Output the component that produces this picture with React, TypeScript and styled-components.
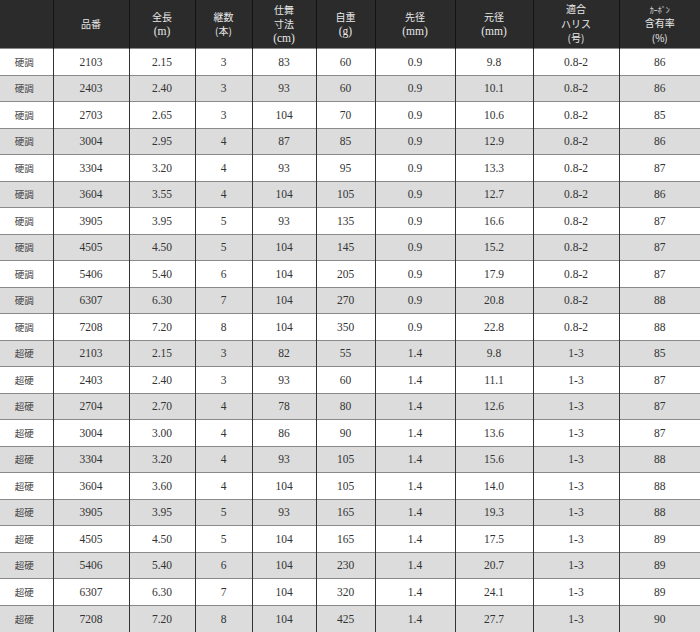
import React from "react";
import styled, { createGlobalStyle } from "styled-components";

const Global = createGlobalStyle`
  html, body { margin: 0; padding: 0; background: #ffffff; }
`;

const Table = styled.table`
  width: 700px;
  border-collapse: collapse;
  table-layout: fixed;
  font-family: "Liberation Serif", "DejaVu Serif", serif;
  color: #333333;
`;

const HeadCell = styled.th`
  height: 48px;
  padding: 0;
  background: #2b2b2b;
  color: #e8e8e8;
  font-weight: normal;
  font-size: 11.5px;
  line-height: 13.5px;
  text-align: center;
  vertical-align: middle;
  border-left: 1px solid #141414;
  &:first-child { border-left: none; }
`;

const Jp = styled.span`
  font-family: "Noto Sans CJK JP", "Noto Sans", sans-serif;
  font-size: 10px;
`;

const Tiny = styled.span`
  font-family: "Noto Sans CJK JP", "Noto Sans", sans-serif;
  font-size: 8px;
`;

const Row = styled.tr<{ $alt: boolean }>`
  height: 26.5px;
  background: ${(p) => (p.$alt ? "#dcdcdc" : "#ffffff")};
`;

const Cell = styled.td`
  padding: 0;
  font-size: 11.5px;
  text-align: center;
  vertical-align: middle;
  border-top: 1px solid #8a8a8a;
  border-left: 1.5px solid #333333;
  &:first-child { border-left: none; }
`;

const TypeCell = styled(Cell)`
  font-family: "Noto Sans CJK JP", "Noto Sans", sans-serif;
  font-size: 9.5px;
  color: #444;
  padding-right: 4px;
`;

const widths = [53, 76, 66, 57, 64, 59, 80, 78, 86, 81];

const rows: string[][] = [
  ["硬調", "2103", "2.15", "3", "83", "60", "0.9", "9.8", "0.8-2", "86"],
  ["硬調", "2403", "2.40", "3", "93", "60", "0.9", "10.1", "0.8-2", "86"],
  ["硬調", "2703", "2.65", "3", "104", "70", "0.9", "10.6", "0.8-2", "85"],
  ["硬調", "3004", "2.95", "4", "87", "85", "0.9", "12.9", "0.8-2", "86"],
  ["硬調", "3304", "3.20", "4", "93", "95", "0.9", "13.3", "0.8-2", "87"],
  ["硬調", "3604", "3.55", "4", "104", "105", "0.9", "12.7", "0.8-2", "86"],
  ["硬調", "3905", "3.95", "5", "93", "135", "0.9", "16.6", "0.8-2", "87"],
  ["硬調", "4505", "4.50", "5", "104", "145", "0.9", "15.2", "0.8-2", "87"],
  ["硬調", "5406", "5.40", "6", "104", "205", "0.9", "17.9", "0.8-2", "87"],
  ["硬調", "6307", "6.30", "7", "104", "270", "0.9", "20.8", "0.8-2", "88"],
  ["硬調", "7208", "7.20", "8", "104", "350", "0.9", "22.8", "0.8-2", "88"],
  ["超硬", "2103", "2.15", "3", "82", "55", "1.4", "9.8", "1-3", "85"],
  ["超硬", "2403", "2.40", "3", "93", "60", "1.4", "11.1", "1-3", "87"],
  ["超硬", "2704", "2.70", "4", "78", "80", "1.4", "12.6", "1-3", "87"],
  ["超硬", "3004", "3.00", "4", "86", "90", "1.4", "13.6", "1-3", "87"],
  ["超硬", "3304", "3.20", "4", "93", "105", "1.4", "15.6", "1-3", "88"],
  ["超硬", "3604", "3.60", "4", "104", "105", "1.4", "14.0", "1-3", "88"],
  ["超硬", "3905", "3.95", "5", "93", "165", "1.4", "19.3", "1-3", "88"],
  ["超硬", "4505", "4.50", "5", "104", "165", "1.4", "17.5", "1-3", "89"],
  ["超硬", "5406", "5.40", "6", "104", "230", "1.4", "20.7", "1-3", "89"],
  ["超硬", "6307", "6.30", "7", "104", "320", "1.4", "24.1", "1-3", "89"],
  ["超硬", "7208", "7.20", "8", "104", "425", "1.4", "27.7", "1-3", "90"],
];

export default function App() {
  return (
    <>
      <Global />
      <Table>
        <colgroup>
          {widths.map((w, i) => (
            <col key={i} style={{ width: w }} />
          ))}
        </colgroup>
        <thead>
          <tr>
            <HeadCell />
            <HeadCell><Jp>品番</Jp></HeadCell>
            <HeadCell><Jp>全長</Jp><br />(m)</HeadCell>
            <HeadCell><Jp>継数</Jp><br /><Jp>(本)</Jp></HeadCell>
            <HeadCell><Jp>仕舞</Jp><br /><Jp>寸法</Jp><br />(cm)</HeadCell>
            <HeadCell><Jp>自重</Jp><br />(g)</HeadCell>
            <HeadCell><Jp>先径</Jp><br />(mm)</HeadCell>
            <HeadCell><Jp>元径</Jp><br />(mm)</HeadCell>
            <HeadCell><Jp>適合</Jp><br /><Jp>ハリス</Jp><br /><Jp>(号)</Jp></HeadCell>
            <HeadCell><Tiny>ｶｰﾎﾞﾝ</Tiny><br /><Jp>含有率</Jp><br /><Jp>(%)</Jp></HeadCell>
          </tr>
        </thead>
        <tbody>
          {rows.map((r, i) => (
            <Row key={i} $alt={i % 2 === 1}>
              <TypeCell>{r[0]}</TypeCell>
              {r.slice(1).map((v, j) => (
                <Cell key={j}>{v}</Cell>
              ))}
            </Row>
          ))}
        </tbody>
      </Table>
    </>
  );
}
